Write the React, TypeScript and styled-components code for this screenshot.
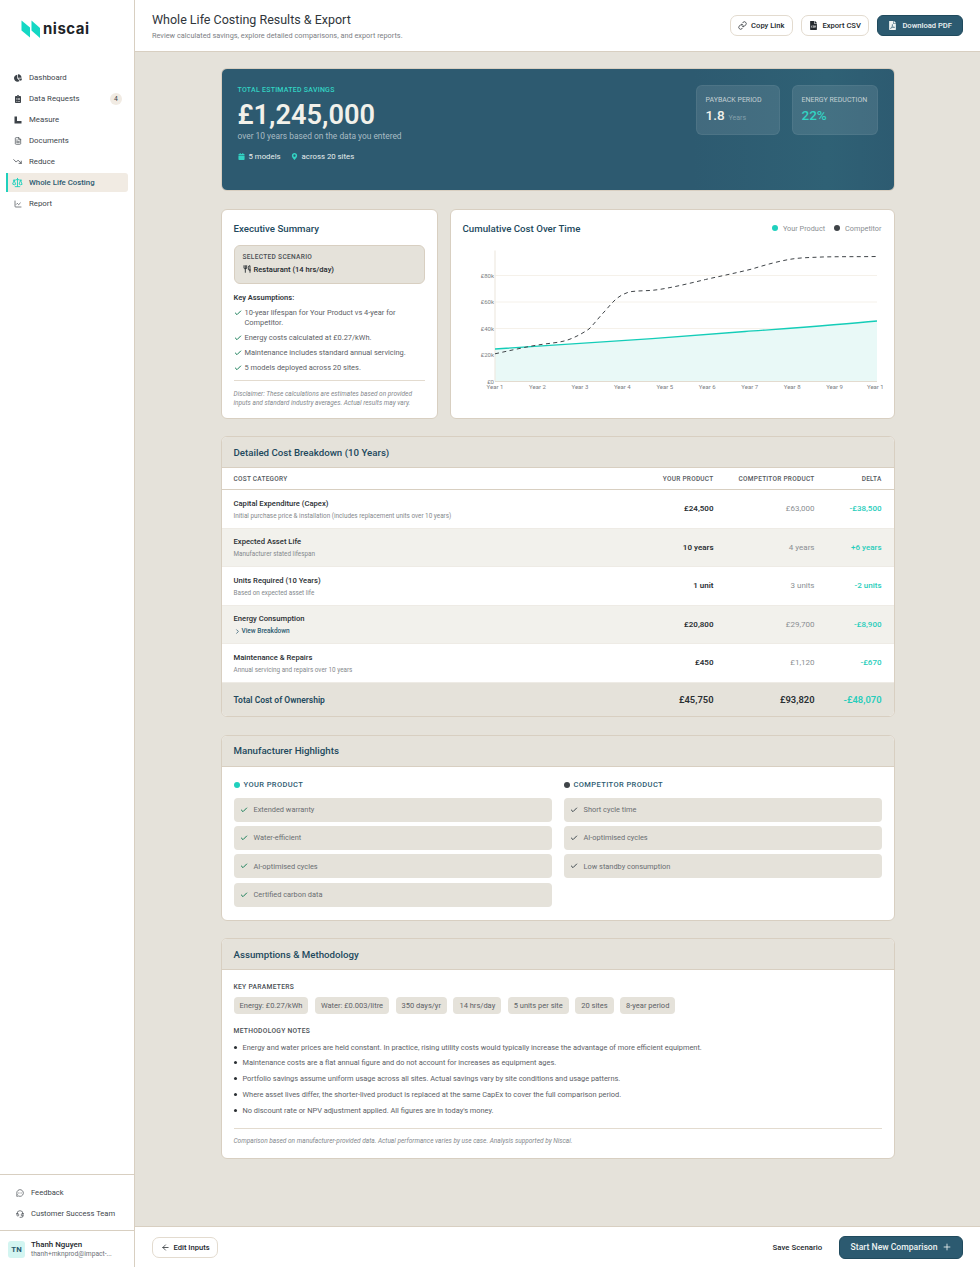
import { createGlobalStyle, styled } from 'styled-components';
import {
  ArrowLeft,
  Check,
  ChevronRight,
  FileText,
  Headset,
  LineChart,
  Link,
  MessageCircleMore,
  Plus,
  Scale,
  TrendingDown,
  Utensils,
} from 'lucide-react';
import { FaCalendar, FaChartPie, FaClipboardList, FaFileCsv, FaFilePdf, FaMapMarkerAlt } from 'react-icons/fa';

const GlobalStyle = createGlobalStyle`
  html, body { margin: 0; padding: 0; }
  body {
    font-family: Roboto, "Noto Sans", sans-serif;
    color: #23282d;
    background: #e5e2da;
  }
  * { box-sizing: border-box; }
`;

const Shell = styled.div`
  display: flex;
  width: 980px;
  height: 1267px;
  overflow: hidden;
`;

const Sidebar = styled.aside`
  width: 135px;
  flex: none;
  background: #fff;
  border-right: 1px solid #d8cfc1;
  display: flex;
  flex-direction: column;
`;

const LogoRow = styled.div`
  height: 68px;
  padding: 20px 0 0 21px;
  display: flex;
  align-items: flex-start;
  gap: 2px;
`;

const LogoText = styled.span`
  font-family: "Inter", sans-serif;
  font-size: 15px;
  font-weight: 700;
  letter-spacing: 0.5px;
  color: #1d2327;
  line-height: 18px;
`;

const Nav = styled.nav`
  display: flex;
  flex-direction: column;
  gap: 2px;
  padding: 0 6px;
  flex: 1;
`;

const NavItem = styled.div<{ $active?: boolean }>`
  height: 19px;
  display: flex;
  align-items: center;
  gap: 6px;
  padding-left: 4px;
  padding-right: 6px;
  font-size: 7.8px;
  font-weight: ${(p) => (p.$active ? 500 : 400)};
  color: ${(p) => (p.$active ? '#2c5a70' : '#40464c')};
  background: ${(p) => (p.$active ? '#f1ebe3' : 'transparent')};
  border-radius: ${(p) => (p.$active ? '0 3px 3px 0' : '0')};
  border-left: 2px solid ${(p) => (p.$active ? '#1fd0bd' : 'transparent')};
  svg { color: ${(p) => (p.$active ? '#1fd0bd' : '#3d4349')}; }
`;

const NavIcon = styled.span`
  width: 11px;
  flex: none;
  display: flex;
  align-items: center;
  justify-content: center;
`;

const NavBadge = styled.span`
  margin-left: auto;
  width: 12px;
  height: 12px;
  border-radius: 50%;
  background: #f1ebe3;
  font-size: 6.8px;
  display: flex;
  align-items: center;
  justify-content: center;
`;

const SideLinks = styled.div`
  border-top: 1px solid #d8cfc1;
  border-bottom: 1px solid #d8cfc1;
  padding: 8px 0 7px 16px;
  display: flex;
  flex-direction: column;
  gap: 2px;
`;

const SideLink = styled.div`
  height: 19px;
  display: flex;
  align-items: center;
  gap: 7px;
  font-size: 7.6px;
  font-weight: 400;
  color: #40464c;
`;

const UserRow = styled.div`
  height: 36px;
  display: flex;
  align-items: center;
  padding-left: 8px;
  gap: 6px;
`;

const Avatar = styled.div`
  width: 17px;
  height: 17px;
  border-radius: 3px;
  background: #d3f5f1;
  color: #2c5a70;
  font-size: 7.8px;
  font-weight: 700;
  display: flex;
  align-items: center;
  justify-content: center;
`;

const UserName = styled.div`
  font-size: 7.9px;
  font-weight: 500;
  line-height: 11px;
`;

const UserMail = styled.div`
  font-size: 6.7px;
  line-height: 9px;
  color: #6e7378;
`;

const Main = styled.main`
  flex: 1;
  min-width: 0;
  display: flex;
  flex-direction: column;
`;

const TopBar = styled.header`
  height: 52px;
  flex: none;
  background: #fff;
  border-bottom: 1px solid #d8cfc1;
  display: flex;
  align-items: center;
  justify-content: space-between;
  padding: 0 17px;
`;

const PageTitle = styled.h1`
  margin: 0;
  font-size: 12.5px;
  font-weight: 400;
  line-height: 16px;
  color: #30363b;
`;

const PageSub = styled.p`
  margin: 3px 0 0;
  font-size: 7.35px;
  line-height: 9px;
  color: #7c8084;
`;

const ButtonRow = styled.div`
  display: flex;
  gap: 8px;
`;

const OutlineButton = styled.button`
  height: 21px;
  display: inline-flex;
  align-items: center;
  gap: 4px;
  padding: 0 7.5px;
  background: #fff;
  border: 1px solid #e3dbcf;
  border-radius: 7px;
  font: 500 7.6px Roboto, sans-serif;
  color: #23282d;
`;

const PrimaryButton = styled.button<{ $large?: boolean }>`
  height: ${(p) => (p.$large ? 23 : 21)}px;
  display: inline-flex;
  align-items: center;
  gap: ${(p) => (p.$large ? 4 : 5)}px;
  padding: 0 ${(p) => (p.$large ? 10.5 : 10)}px;
  background: #2c5a70;
  border: 1px solid #204a5d;
  border-radius: 6px;
  font: 500 ${(p) => (p.$large ? 8.6 : 7.6)}px Roboto, sans-serif;
  color: #eef3f2;
`;

const Content = styled.div`
  flex: 1;
  min-height: 0;
  padding: 16px 0 0;
  display: flex;
  flex-direction: column;
  align-items: center;
  gap: 17.5px;
`;

const Hero = styled.section`
  width: 674px;
  height: 123px;
  flex: none;
  border-radius: 6px;
  border: 1px solid #d8cfc1;
  background: linear-gradient(90deg, #2d5a70 0%, #2d5a70 70%, #2f6175 90%, #2d5b71 100%);
  padding: 16px 16px 0;
  display: flex;
  justify-content: space-between;
  align-items: flex-start;
`;

const HeroLabel = styled.div`
  margin-top: 1px;
  font-size: 7px;
  line-height: 9px;
  letter-spacing: 0.25px;
  color: #32d3c3;
  font-weight: 500;
`;

const HeroValue = styled.div`
  font-size: 27.2px;
  font-weight: 600;
  line-height: 32px;
  margin-top: 4px;
  color: #f2f1ea;
`;

const HeroNote = styled.div`
  font-size: 8.4px;
  line-height: 12px;
  margin-top: -1px;
  color: #a9bcc4;
`;

const HeroMeta = styled.div`
  display: flex;
  gap: 10px;
  margin-top: 9.5px;
`;

const MetaItem = styled.span`
  display: flex;
  align-items: center;
  gap: 4px;
  font-size: 7.8px;
  line-height: 10px;
  font-weight: 400;
  color: #e8eeee;
  svg { color: #32d3c3; }
`;

const StatRow = styled.div`
  display: flex;
  gap: 12px;
`;

const StatBox = styled.div<{ $w: number }>`
  width: ${(p) => p.$w}px;
  height: 50px;
  padding: 10px 9px 0;
  border-radius: 6px;
  background: rgba(255, 255, 255, 0.1);
  border: 1px solid rgba(255, 255, 255, 0.06);
`;

const StatLabel = styled.div`
  font-size: 7px;
  line-height: 9px;
  white-space: nowrap;
  color: #c3d0d4;
`;

const StatValue = styled.div<{ $accent?: boolean }>`
  display: flex;
  align-items: baseline;
  gap: 4px;
  margin-top: 2px;
  font-size: 13.5px;
  line-height: 16px;
  font-weight: 500;
  color: ${(p) => (p.$accent ? '#32d3c3' : '#f2f1ea')};
`;

const StatUnit = styled.span`
  font-size: 7px;
  font-weight: 400;
  color: #84a0ab;
`;

const TwoCol = styled.div`
  width: 674px;
  height: 210px;
  flex: none;
  display: grid;
  grid-template-columns: 217px 445px;
  gap: 12px;
`;

const Card = styled.section`
  background: #fff;
  border: 1px solid #d8cfc1;
  border-radius: 6px;
  overflow: hidden;
`;

const WideCard = styled(Card)<{ $h: number }>`
  width: 674px;
  height: ${(p) => p.$h}px;
  flex: none;
`;

const SummaryCard = styled(Card)`
  padding: 12px 12px 0;
`;

const CardTitle = styled.h2`
  margin: 0;
  font-size: 9.7px;
  line-height: 13px;
  font-weight: 500;
  color: #22495d;
`;

const ScenarioBox = styled.div`
  margin-top: 10px;
  height: 39px;
  padding: 7px 8px 0;
  background: #e5e2da;
  border: 1px solid #d8cfc1;
  border-radius: 6px;
`;

const ScenarioLabel = styled.div`
  font-size: 6.6px;
  line-height: 9px;
  letter-spacing: 0.3px;
  color: #4a4f54;
  font-weight: 500;
`;

const ScenarioValue = styled.div`
  display: flex;
  align-items: center;
  gap: 3px;
  margin-top: 2px;
  font-size: 7.6px;
  line-height: 11px;
  font-weight: 500;
`;

const KeyTitle = styled.div`
  margin-top: 8px;
  font-size: 7.5px;
  line-height: 11px;
  font-weight: 600;
  color: #33383d;
`;

const CheckList = styled.ul`
  list-style: none;
  margin: 5px 0 0;
  padding: 0;
  display: flex;
  flex-direction: column;
  gap: 5px;
`;

const CheckItem = styled.li`
  display: flex;
  gap: 3px;
  font-size: 7.45px;
  line-height: 10px;
  color: #5c6166;
  svg { flex: none; margin-top: 1px; color: #1a7f5a; }
`;

const Disclaimer = styled.p`
  margin: 7px 0 0;
  padding-top: 9px;
  border-top: 1px solid #e3dbcf;
  font-size: 6.5px;
  line-height: 9px;
  font-style: italic;
  color: #85898d;
`;

const ChartCard = styled(Card)`
  padding: 12px 12px 0;
`;

const ChartHead = styled.div`
  display: flex;
  justify-content: space-between;
  align-items: center;
`;

const Legend = styled.div`
  display: flex;
  gap: 9px;
`;

const LegendItem = styled.span`
  display: flex;
  align-items: center;
  gap: 5px;
  font-size: 7.3px;
  color: #8b8f93;
`;

const Dot = styled.span<{ $c: string }>`
  width: 6px;
  height: 6px;
  border-radius: 50%;
  background: ${(p) => p.$c};
`;

const ChartSvg = styled.svg`
  display: block;
  margin-top: 8px;
`;

const SectionHead = styled.div`
  height: 31px;
  padding: 0 12px;
  display: flex;
  align-items: center;
  background: #e5e2da;
  border-bottom: 1px solid #d8cfc1;
`;

const TableHead = styled.div`
  height: 22px;
  display: grid;
  grid-template-columns: 1fr 90px 101px 67px;
  align-items: center;
  padding: 0 12px;
  border-bottom: 1px solid #d8cfc1;
`;

const HeadCell = styled.span<{ $right?: boolean }>`
  font-size: 6.5px;
  font-weight: 500;
  letter-spacing: 0.25px;
  color: #55595e;
  text-align: ${(p) => (p.$right ? 'right' : 'left')};
`;

const TableRow = styled.div<{ $alt?: boolean }>`
  height: 38.5px;
  display: grid;
  grid-template-columns: 1fr 90px 101px 67px;
  align-items: center;
  padding: 0 12px;
  background: ${(p) => (p.$alt ? '#f2f1ec' : '#fff')};
  border-bottom: 1px solid #eeebe5;
`;

const RowName = styled.div`
  font-size: 7.65px;
  line-height: 11px;
  font-weight: 500;
  color: #2a2f33;
`;

const RowDesc = styled.div`
  margin-top: 3px;
  font-size: 6.35px;
  line-height: 8px;
  color: #85898d;
`;

const RowLink = styled.div`
  margin-top: 3px;
  display: flex;
  align-items: center;
  gap: 1px;
  font-size: 6.5px;
  line-height: 8px;
  font-weight: 500;
  color: #2c5a70;
`;

const ValueCell = styled.div<{ $tone: 'own' | 'other' | 'delta' }>`
  text-align: right;
  font-size: 8px;
  font-weight: ${(p) => (p.$tone === 'own' ? 600 : p.$tone === 'delta' ? 500 : 400)};
  color: ${(p) => (p.$tone === 'own' ? '#2a2f33' : p.$tone === 'delta' ? '#27cdbb' : '#8b8f93')};
`;

const TotalRow = styled.div`
  height: 34px;
  display: grid;
  grid-template-columns: 1fr 90px 101px 67px;
  align-items: center;
  padding: 0 12px;
  background: #e5e2da;
`;

const TotalName = styled.div`
  font-size: 8.5px;
  font-weight: 600;
  color: #22495d;
`;

const TotalValue = styled.div<{ $delta?: boolean }>`
  text-align: right;
  font-size: 9.4px;
  font-weight: 600;
  color: ${(p) => (p.$delta ? '#27cdbb' : '#2a2f33')};
`;

const HighlightGrid = styled.div`
  padding: 13px 12px 0;
  display: grid;
  grid-template-columns: 318px 318px;
  gap: 12px;
`;

const ColumnTitle = styled.div`
  display: flex;
  align-items: center;
  gap: 4px;
  font-size: 7.5px;
  line-height: 10px;
  font-weight: 500;
  letter-spacing: 0.4px;
  color: #2c5a70;
  margin-bottom: 8px;
`;

const HighlightItem = styled.div<{ $muted?: boolean }>`
  height: 24px;
  margin-bottom: 4.4px;
  display: flex;
  align-items: center;
  gap: 6px;
  padding-left: 6px;
  background: #e5e2da;
  border-radius: 4px;
  font-size: 7.4px;
  color: #6a6e72;
  svg { color: ${(p) => (p.$muted ? '#3f4a50' : '#1a7f5a')}; }
`;

const MethodBody = styled.div`
  padding: 13px 12px 0;
`;

const SmallHeading = styled.div`
  font-size: 6.7px;
  line-height: 9px;
  font-weight: 500;
  letter-spacing: 0.3px;
  color: #4a4f54;
`;

const Chips = styled.div`
  display: flex;
  gap: 6.5px;
  margin: 5px 0 12.5px;
`;

const Chip = styled.span`
  height: 17px;
  padding: 0 6px;
  display: flex;
  align-items: center;
  border-radius: 4px;
  background: #e5e2da;
  font-size: 7.5px;
  color: #5c6166;
`;

const Notes = styled.ul`
  list-style: none;
  margin: 4px 0 0;
  padding: 0;
`;

const Note = styled.li`
  height: 15.9px;
  padding-left: 9px;
  font-size: 7.4px;
  line-height: 16px;
  color: #5c6166;
  position: relative;
  &::before {
    content: '';
    position: absolute;
    left: 0;
    top: 6px;
    width: 3px;
    height: 3px;
    border-radius: 50%;
    background: #2a2f33;
  }
`;

const FootNote = styled.p`
  margin: 9px 0 0;
  padding-top: 8px;
  border-top: 1px solid #e3dbcf;
  font-size: 6.5px;
  line-height: 9px;
  font-style: italic;
  color: #85898d;
`;

const BottomBar = styled.footer`
  height: 41px;
  flex: none;
  background: #fff;
  border-top: 1px solid #d8cfc1;
  display: flex;
  align-items: center;
  justify-content: space-between;
  padding: 0 17px;
`;

const BottomRight = styled.div`
  display: flex;
  align-items: center;
  gap: 17px;
`;

const TextButton = styled.span`
  font-size: 7.8px;
  font-weight: 500;
`;

const navItems = [
  { label: 'Dashboard', icon: <FaChartPie size={8} /> },
  { label: 'Data Requests', icon: <FaClipboardList size={8} />, badge: '4' },
  {
    label: 'Measure',
    icon: (
      <svg width="8" height="8" viewBox="0 0 8 8" fill="currentColor">
        <path d="M0.5 0.5H3V5H7.5V7.5H0.5Z" />
      </svg>
    ),
  },
  { label: 'Documents', icon: <FileText size={8} /> },
  { label: 'Reduce', icon: <TrendingDown size={9} /> },
  { label: 'Whole Life Costing', icon: <Scale size={11} />, active: true },
  { label: 'Report', icon: <LineChart size={8} /> },
];

const rows = [
  { name: 'Capital Expenditure (Capex)', desc: 'Initial purchase price & installation (includes replacement units over 10 years)', own: '£24,500', other: '£63,000', delta: '-£38,500' },
  { name: 'Expected Asset Life', desc: 'Manufacturer stated lifespan', own: '10 years', other: '4 years', delta: '+6 years', alt: true },
  { name: 'Units Required (10 Years)', desc: 'Based on expected asset life', own: '1 unit', other: '3 units', delta: '-2 units' },
  { name: 'Energy Consumption', link: 'View Breakdown', own: '£20,800', other: '£29,700', delta: '-£8,900', alt: true },
  { name: 'Maintenance & Repairs', desc: 'Annual servicing and repairs over 10 years', own: '£450', other: '£1,120', delta: '-£670' },
];

const ownHighlights = ['Extended warranty', 'Water-efficient', 'AI-optimised cycles', 'Certified carbon data'];
const otherHighlights = ['Short cycle time', 'AI-optimised cycles', 'Low standby consumption'];
const params = ['Energy: £0.27/kWh', 'Water: £0.003/litre', '350 days/yr', '14 hrs/day', '5 units per site', '20 sites', '8-year period'];
const notes = [
  'Energy and water prices are held constant. In practice, rising utility costs would typically increase the advantage of more efficient equipment.',
  'Maintenance costs are a flat annual figure and do not account for increases as equipment ages.',
  'Portfolio savings assume uniform usage across all sites. Actual savings vary by site conditions and usage patterns.',
  'Where asset lives differ, the shorter-lived product is replaced at the same CapEx to cover the full comparison period.',
  'No discount rate or NPV adjustment applied. All figures are in today\'s money.',
];
const assumptions = [
  '10-year lifespan for Your Product vs 4-year for Competitor.',
  'Energy costs calculated at £0.27/kWh.',
  'Maintenance includes standard annual servicing.',
  '5 models deployed across 20 sites.',
];

const yTicks = [
  { label: '£80k', y: 32.5 },
  { label: '£60k', y: 59 },
  { label: '£40k', y: 85.5 },
  { label: '£20k', y: 112 },
];

const CostChart = () => (
  <ChartSvg width="420" height="152" viewBox="0 0 420 152">
    {yTicks.map((t) => (
      <g key={t.label}>
        <line x1="32" x2="414" y1={t.y} y2={t.y} stroke="#f5f1ea" strokeWidth="1" />
        <text x="31" y={t.y + 2} fontSize="6" fill="#7c8084" textAnchor="end">{t.label}</text>
      </g>
    ))}
    <text x="31" y="140.5" fontSize="6" fill="#7c8084" textAnchor="end">£0</text>
    <path d="M32 106 C100 102 200 95 282 88.5 C330 85 375 82 414 78 V138.5 H32 Z" fill="#e9f9f7" />
    <line x1="32" x2="32" y1="7.5" y2="138.5" stroke="#efeae1" strokeWidth="1.2" />
    <line x1="32" x2="414" y1="138.5" y2="138.5" stroke="#e3dbcf" strokeWidth="1" />
    <path d="M32 106 C100 102 200 95 282 88.5 C330 85 375 82 414 78" fill="none" stroke="#14cdb8" strokeWidth="1.3" />
    <path
      d="M32 110.8 C45 108 58 105 69 103 C85 100 97 100 106 96.5 C114 93.5 120 90 126 86 C132 80 137 73 142.5 67.5 C148 61 153 55 159 52 C162 50.5 165 49 169 48.5 C178 47.5 187 48 196 46.5 C212 44 228 40 242.5 36.5 C258 33 273 30 289 26 C302 22 316 18 329 16 C339 14.5 349 14.5 359 14 C377 13.5 395 13.8 414 13.5"
      fill="none"
      stroke="#3f4448"
      strokeWidth="1"
      strokeDasharray="4 3.4"
    />
    {Array.from({ length: 10 }, (_, i) => (
      <text key={i} x={32 + i * 42.45} y="146" fontSize="6" fill="#7c8084" textAnchor="middle">
        Year {i + 1}
      </text>
    ))}
  </ChartSvg>
);

const App = () => (
  <>
    <GlobalStyle />
    <Shell>
      <Sidebar>
        <LogoRow>
          <svg width="20" height="18" viewBox="0 0 20 18">
            <path d="M0.5 0.5 L9 7.5 V17.5 L0.5 10.5 Z" fill="#14d8c4" />
            <path d="M10.5 0.5 L19 8 V18 L10.5 10.5 Z" fill="#14d8c4" />
          </svg>
          <LogoText>niscai</LogoText>
        </LogoRow>
        <Nav>
          {navItems.map((item) => (
            <NavItem key={item.label} $active={item.active}>
              <NavIcon>{item.icon}</NavIcon>
              {item.label}
              {item.badge && <NavBadge>{item.badge}</NavBadge>}
            </NavItem>
          ))}
        </Nav>
        <SideLinks>
          <SideLink><MessageCircleMore size={8} />Feedback</SideLink>
          <SideLink><Headset size={8} />Customer Success Team</SideLink>
        </SideLinks>
        <UserRow>
          <Avatar>TN</Avatar>
          <div>
            <UserName>Thanh Nguyen</UserName>
            <UserMail>thanh+mknprod@impact-...</UserMail>
          </div>
        </UserRow>
      </Sidebar>
      <Main>
        <TopBar>
          <div>
            <PageTitle>Whole Life Costing Results &amp; Export</PageTitle>
            <PageSub>Review calculated savings, explore detailed comparisons, and export reports.</PageSub>
          </div>
          <ButtonRow>
            <OutlineButton><Link size={9} />Copy Link</OutlineButton>
            <OutlineButton><FaFileCsv size={9} />Export CSV</OutlineButton>
            <PrimaryButton><FaFilePdf size={9} />Download PDF</PrimaryButton>
          </ButtonRow>
        </TopBar>
        <Content>
          <Hero>
            <div>
              <HeroLabel>TOTAL ESTIMATED SAVINGS</HeroLabel>
              <HeroValue>£1,245,000</HeroValue>
              <HeroNote>over 10 years based on the data you entered</HeroNote>
              <HeroMeta>
                <MetaItem><FaCalendar size={7} />5 models</MetaItem>
                <MetaItem><FaMapMarkerAlt size={7} />across 20 sites</MetaItem>
              </HeroMeta>
            </div>
            <StatRow>
              <StatBox $w={84}>
                <StatLabel>PAYBACK PERIOD</StatLabel>
                <StatValue>1.8 <StatUnit>Years</StatUnit></StatValue>
              </StatBox>
              <StatBox $w={86}>
                <StatLabel>ENERGY REDUCTION</StatLabel>
                <StatValue $accent>22%</StatValue>
              </StatBox>
            </StatRow>
          </Hero>
          <TwoCol>
            <SummaryCard>
              <CardTitle>Executive Summary</CardTitle>
              <ScenarioBox>
                <ScenarioLabel>SELECTED SCENARIO</ScenarioLabel>
                <ScenarioValue><Utensils size={8} strokeWidth={2.6} />Restaurant (14 hrs/day)</ScenarioValue>
              </ScenarioBox>
              <KeyTitle>Key Assumptions:</KeyTitle>
              <CheckList>
                {assumptions.map((a) => (
                  <CheckItem key={a}><Check size={8} strokeWidth={3} />{a}</CheckItem>
                ))}
              </CheckList>
              <Disclaimer>
                Disclaimer: These calculations are estimates based on provided inputs and standard industry averages. Actual results may vary.
              </Disclaimer>
            </SummaryCard>
            <ChartCard>
              <ChartHead>
                <CardTitle>Cumulative Cost Over Time</CardTitle>
                <Legend>
                  <LegendItem><Dot $c="#1fd0bd" />Your Product</LegendItem>
                  <LegendItem><Dot $c="#3f4448" />Competitor</LegendItem>
                </Legend>
              </ChartHead>
              <CostChart />
            </ChartCard>
          </TwoCol>
          <WideCard $h={281}>
            <SectionHead><CardTitle>Detailed Cost Breakdown (10 Years)</CardTitle></SectionHead>
            <TableHead>
              <HeadCell>COST CATEGORY</HeadCell>
              <HeadCell $right>YOUR PRODUCT</HeadCell>
              <HeadCell $right>COMPETITOR PRODUCT</HeadCell>
              <HeadCell $right>DELTA</HeadCell>
            </TableHead>
            {rows.map((r) => (
              <TableRow key={r.name} $alt={r.alt}>
                <div>
                  <RowName>{r.name}</RowName>
                  {r.desc && <RowDesc>{r.desc}</RowDesc>}
                  {r.link && <RowLink><ChevronRight size={7} strokeWidth={2.6} />{r.link}</RowLink>}
                </div>
                <ValueCell $tone="own">{r.own}</ValueCell>
                <ValueCell $tone="other">{r.other}</ValueCell>
                <ValueCell $tone="delta">{r.delta}</ValueCell>
              </TableRow>
            ))}
            <TotalRow>
              <TotalName>Total Cost of Ownership</TotalName>
              <TotalValue>£45,750</TotalValue>
              <TotalValue>£93,820</TotalValue>
              <TotalValue $delta>-£48,070</TotalValue>
            </TotalRow>
          </WideCard>
          <WideCard $h={186}>
            <SectionHead><CardTitle>Manufacturer Highlights</CardTitle></SectionHead>
            <HighlightGrid>
              <div>
                <ColumnTitle><Dot $c="#1fd0bd" />YOUR PRODUCT</ColumnTitle>
                {ownHighlights.map((h) => (
                  <HighlightItem key={h}><Check size={8} strokeWidth={3} />{h}</HighlightItem>
                ))}
              </div>
              <div>
                <ColumnTitle><Dot $c="#3f4448" />COMPETITOR PRODUCT</ColumnTitle>
                {otherHighlights.map((h) => (
                  <HighlightItem key={h} $muted><Check size={8} strokeWidth={3} />{h}</HighlightItem>
                ))}
              </div>
            </HighlightGrid>
          </WideCard>
          <WideCard $h={221}>
            <SectionHead><CardTitle>Assumptions &amp; Methodology</CardTitle></SectionHead>
            <MethodBody>
              <SmallHeading>KEY PARAMETERS</SmallHeading>
              <Chips>
                {params.map((p) => <Chip key={p}>{p}</Chip>)}
              </Chips>
              <SmallHeading>METHODOLOGY NOTES</SmallHeading>
              <Notes>
                {notes.map((n) => <Note key={n}>{n}</Note>)}
              </Notes>
              <FootNote>Comparison based on manufacturer-provided data. Actual performance varies by use case. Analysis supported by Niscai.</FootNote>
            </MethodBody>
          </WideCard>
        </Content>
        <BottomBar>
          <OutlineButton><ArrowLeft size={9} />Edit Inputs</OutlineButton>
          <BottomRight>
            <TextButton>Save Scenario</TextButton>
            <PrimaryButton $large>Start New Comparison<Plus size={10} /></PrimaryButton>
          </BottomRight>
        </BottomBar>
      </Main>
    </Shell>
  </>
);

export default App;
